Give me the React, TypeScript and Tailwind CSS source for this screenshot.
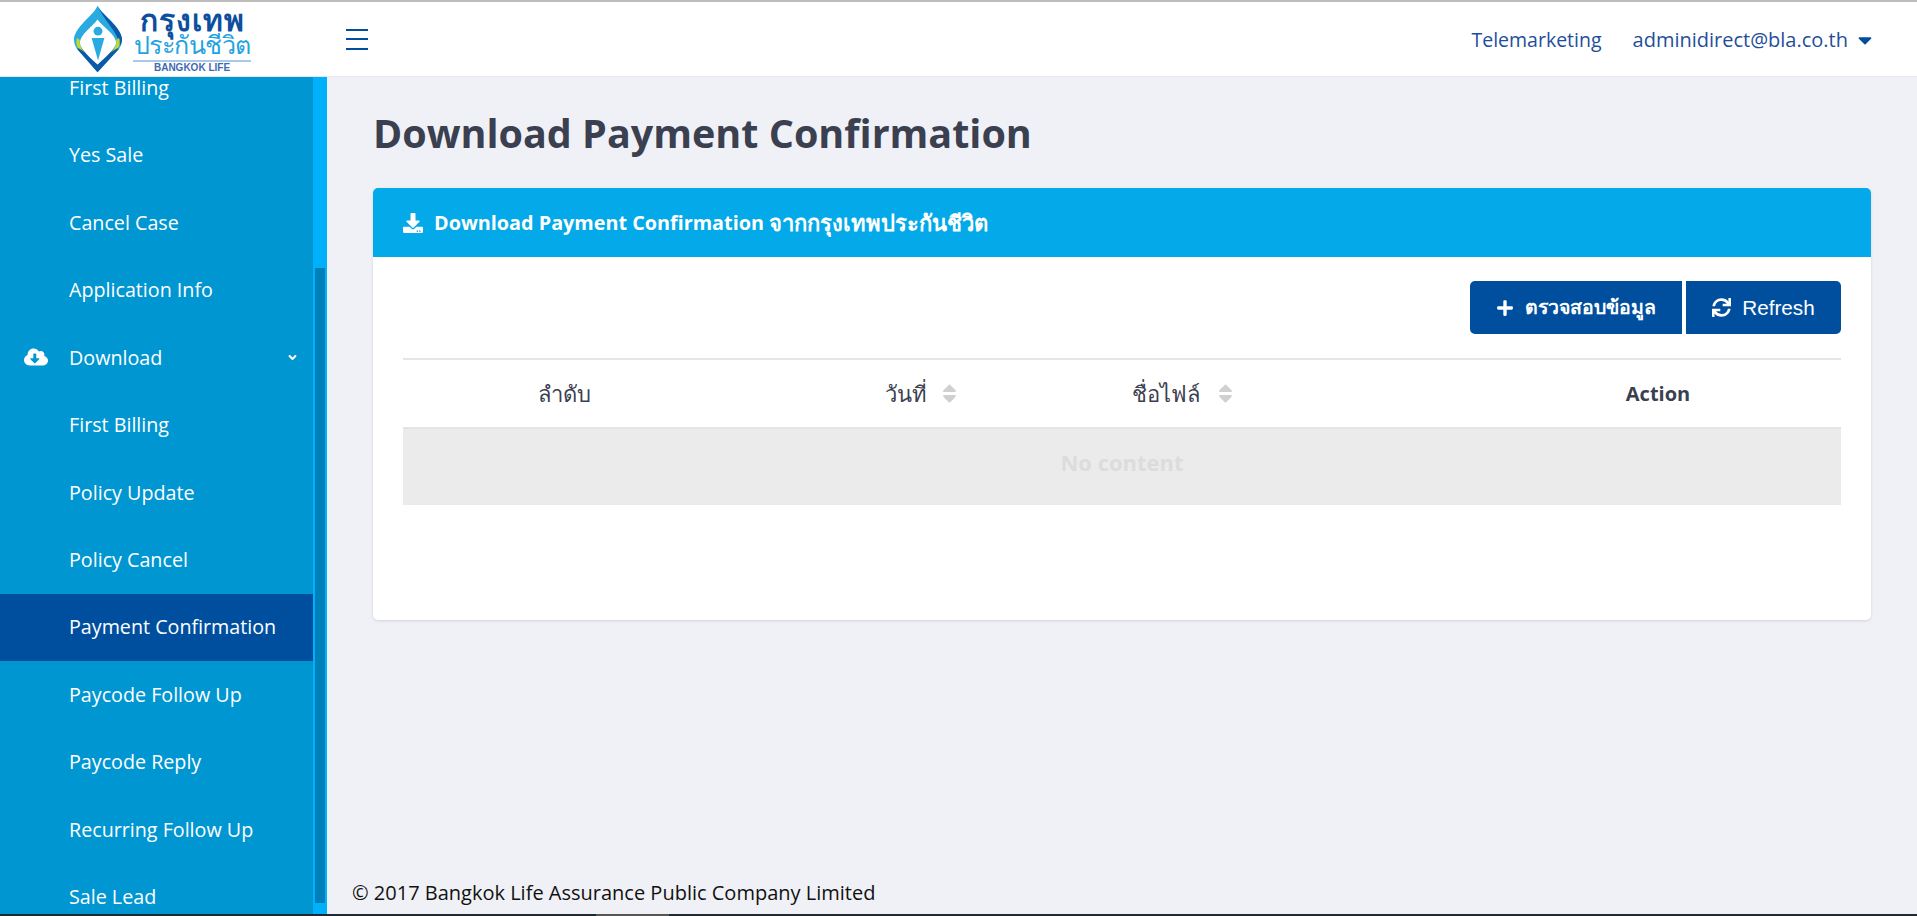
import { FaCloudDownloadAlt, FaDownload, FaPlus, FaSync, FaSort, FaCaretDown, FaAngleDown } from "react-icons/fa";

const menuTop = ["First Billing", "Yes Sale", "Cancel Case", "Application Info"];
const menuDownload = [
  "First Billing",
  "Policy Update",
  "Policy Cancel",
  "Payment Confirmation",
  "Paycode Follow Up",
  "Paycode Reply",
  "Recurring Follow Up",
  "Sale Lead",
];

function Logo() {
  return (
    <div className="flex items-center ml-[73px] w-[273px] shrink-0">
      <svg width="51" height="70" viewBox="0 0 52 70" className="shrink-0">
        {/* outer drop */}
        <path d="M25 1 C21 11 2 22 1 35 C1 39 2 42 4 45 L25 69 L47 45 C49 42 50 39 50 35 C49 22 30 11 25 1Z" fill="#29abe2" />
        {/* dark right side and bottom band */}
        <path d="M25 1 C30 11 49 22 50 35 C50 38 49 40 48 42 C46 28 33 18 25 1Z" fill="#0b5aa8" />
        <path d="M4 45 L25 69 L47 45 L42 44 L25 61 L9 44Z" fill="#0b5aa8" />
        {/* white inner */}
        <path d="M25 15 C31 23 43 30 44 38 C44 44 38 49 25 61 C12 49 7 44 7 38 C8 30 19 23 25 15Z" fill="#ffffff" />
        {/* lime side marks */}
        <path d="M44 36 C45 41 42 46 38 49 L46 44 C48 41 48 37 47 34Z" fill="#c4d82e" />
        <path d="M7 36 C6 41 9 46 13 49 L5 44 C3 41 3 37 4 34Z" fill="#c4d82e" />
        {/* person */}
        <circle cx="25.5" cy="27" r="4.5" fill="#29abe2" />
        <path d="M19 34 L32 34 L25.5 57Z" fill="#29abe2" />
      </svg>
      <div className="ml-[9px] mt-[5px] flex flex-col items-center w-[118px] font-['Noto_Sans','Liberation_Sans',sans-serif]">
        <div className="text-[#0b4f9e] text-[30px] tracking-[1px] leading-[22px] font-bold h-[22px] whitespace-nowrap">กรุงเทพ</div>
        <div className="text-[#1fa3e0] text-[25px] tracking-[-0.5px] leading-[27px] h-[27px] whitespace-nowrap">ประกันชีวิต</div>
        <div className="w-full h-[2px] bg-[#a9c9ea] mt-[2px]" />
        <div className="text-[#3f6ab0] text-[10px] leading-[12px] font-bold font-['Liberation_Sans',sans-serif] whitespace-nowrap">BANGKOK LIFE</div>
      </div>
    </div>
  );
}

function MenuItem({ label, active }: { label: string; active?: boolean }) {
  return (
    <div className={`h-[67.45px] flex items-center pl-[69px] text-white text-[19.7px] ${active ? "bg-[#004f9f]" : ""}`}>
      {label}
    </div>
  );
}

export default function App() {
  return (
    <div className="w-full h-[916px] overflow-hidden flex flex-col font-['Open_Sans','Noto_Sans',sans-serif] bg-[#f0f1f6]">
      {/* Header */}
      <div className="h-[77px] shrink-0 bg-white border-t-2 border-t-[#bdbdbd] border-b border-b-[#e8e8ec] flex items-center">
        <Logo />
        <div className="w-[22px] h-[21px] flex flex-col justify-between">
          <div className="h-[2px] bg-[#004f9f]" />
          <div className="h-[2px] bg-[#004f9f]" />
          <div className="h-[2px] bg-[#004f9f]" />
        </div>
        <div className="ml-auto flex items-center text-[#1f4f9c] text-[19.5px] pr-[41px] pt-[2px]">
          <span>Telemarketing</span>
          <span className="ml-[31px] text-[20px]">adminidirect@bla.co.th</span>
          <FaCaretDown className="ml-[6px] text-[#004f9f]" size={22} />
        </div>
      </div>

      <div className="flex-1 flex min-h-0">
        {/* Sidebar */}
        <div className="w-[327px] shrink-0 flex overflow-hidden">
          <div className="w-[313px] shrink-0 bg-[#0096d1] overflow-hidden">
            <div className="-mt-[23px]">
              {menuTop.map(item => (
                <MenuItem key={item} label={item} />
              ))}
              <div className="h-[67.45px] flex items-center text-white text-[19.7px] relative pl-[69px]">
                <FaCloudDownloadAlt className="absolute left-[24px] text-white" size={24} />
                Download
                <FaAngleDown className="absolute left-[286px] text-white" size={13} />
              </div>
              {menuDownload.map(item => (
                <MenuItem key={item} label={item} active={item === "Payment Confirmation"} />
              ))}
            </div>
          </div>
          {/* Scrollbar */}
          <div className="w-[14px] bg-[#00b0fb] flex justify-center">
            <div className="w-[10px] h-[635px] mt-[191px] bg-[#0080b8]" />
          </div>
        </div>

        {/* Content */}
        <div className="flex-1 flex flex-col min-w-0 pl-[46px] pr-[46px]">
          <h1 className="mt-[28px] text-[39.5px] leading-[56px] font-bold text-[#3a4050] whitespace-nowrap">Download Payment Confirmation</h1>
          <div className="mt-[27px] bg-white rounded-[5px] shadow-[0_1px_3px_rgba(0,0,0,0.12)] h-[432px] overflow-hidden">
            <div className="h-[69px] bg-[#03a9e8] flex items-center pl-[30px] text-white font-bold text-[19.8px] whitespace-nowrap">
              <FaDownload size={20} className="mr-[11px]" />
              Download Payment Confirmation&nbsp;<span className="text-[22px]">จากกรุงเทพประกันชีวิต</span>
            </div>
            <div className="px-[30px] pt-[24px]">
              <div className="flex justify-end gap-[4px]">
                <button className="w-[212px] h-[53px] bg-[#004f9f] rounded-l-[5px] text-white text-[19.5px] font-bold flex items-center justify-center font-['Liberation_Sans',sans-serif]">
                  <FaPlus size={18} className="mr-[11px]" />
                  ตรวจสอบข้อมูล
                </button>
                <button className="w-[155px] h-[53px] bg-[#004f9f] rounded-r-[5px] text-white text-[20.7px] flex items-center justify-center font-['Liberation_Sans',sans-serif]">
                  <FaSync size={19} className="mr-[11px]" />
                  Refresh
                </button>
              </div>
              <div className="mt-[24px] border-t-2 border-t-[#e4e4ea] h-[69px] grid grid-cols-[322px_396px_126px_1fr] items-center text-[#3a4050] text-[22px] font-medium whitespace-nowrap">
                <div className="text-center">ลำดับ</div>
                <div className="flex items-center justify-center">
                  วันที่
                  <FaSort size={23} className="ml-[11px] text-[#d0d0d0]" />
                </div>
                <div className="flex items-center justify-center">
                  ชื่อไฟล์
                  <FaSort size={23} className="ml-[14px] text-[#d0d0d0]" />
                </div>
                <div className="text-center pl-[228px] font-bold text-[20px]">Action</div>
              </div>
              <div className="h-[78px] bg-[#ebebeb] border-t-2 border-t-[#e4e4e6] flex items-center justify-center text-[#dcdcdc] font-bold text-[22px] pb-[10px]">
                No content
              </div>
            </div>
          </div>
          <div className="mt-auto mb-[8px] -ml-[21px] text-[#111] text-[20px] leading-[26px] whitespace-nowrap">© 2017 Bangkok Life Assurance Public Company Limited</div>
        </div>
      </div>
      {/* Bottom edge */}
      <div className="h-[2px] shrink-0 bg-[#1f2a30] flex">
        <div className="ml-[596px] w-[73px] bg-[#555]" />
      </div>
    </div>
  );
}
